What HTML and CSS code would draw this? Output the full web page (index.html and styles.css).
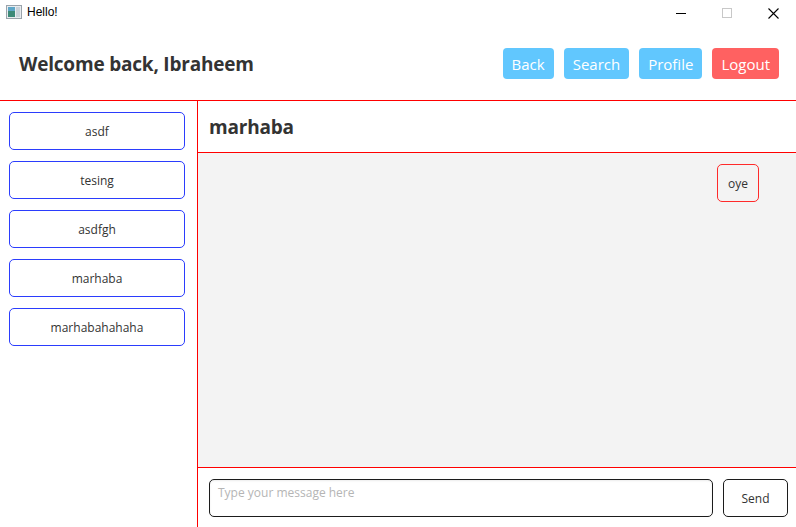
FILE: index.html
```html
<!DOCTYPE html>
<html>
<head>
<meta charset="utf-8">
<link rel="stylesheet" href="styles.css">
</head>
<body>
<div class="window">
  <div class="titlebar">
    <div class="app">
      <svg class="appicon" width="16" height="14" viewBox="0 0 16 14">
        <rect x="0.5" y="0.5" width="15" height="13" fill="#e8ecef" stroke="#9aa3ab"/>
        <rect x="2" y="2" width="7" height="10" fill="#3d8a78"/>
        <rect x="2" y="2" width="7" height="4" fill="#5fa7c8"/>
        <rect x="10" y="2" width="4" height="10" fill="#c9d2d9"/>
      </svg>
      <span class="apptitle">Hello!</span>
    </div>
    <div class="controls">
      <span class="ctl"><svg width="10" height="10" viewBox="0 0 10 10"><line x1="0" y1="5.5" x2="10" y2="5.5" stroke="#000" stroke-width="1"/></svg></span>
      <span class="ctl"><svg width="10" height="10" viewBox="0 0 10 10"><rect x="0.5" y="0.5" width="9" height="9" fill="none" stroke="#c8c8c8"/></svg></span>
      <span class="ctl"><svg width="11" height="11" viewBox="0 0 11 11"><path d="M0.5 0.5 L10.5 10.5 M10.5 0.5 L0.5 10.5" stroke="#000" stroke-width="1.1"/></svg></span>
    </div>
  </div>
  <div class="header">
    <h1 class="welcome">Welcome back, Ibraheem</h1>
    <div class="nav">
      <button class="btn blue">Back</button>
      <button class="btn blue">Search</button>
      <button class="btn blue">Profile</button>
      <button class="btn red">Logout</button>
    </div>
  </div>
  <div class="main">
    <div class="sidebar">
      <div class="chatitem">asdf</div>
      <div class="chatitem">tesing</div>
      <div class="chatitem">asdfgh</div>
      <div class="chatitem">marhaba</div>
      <div class="chatitem">marhabahahaha</div>
    </div>
    <div class="chat">
      <div class="chathead">marhaba</div>
      <div class="messages">
        <div class="bubble">oye</div>
      </div>
      <div class="composer">
        <div class="input">Type your message here</div>
        <button class="send">Send</button>
      </div>
    </div>
  </div>
</div>
</body>
</html>
```
FILE: styles.css
```css
* { box-sizing: border-box; }
html, body { margin: 0; padding: 0; }
body {
  width: 796px;
  height: 527px;
  overflow: hidden;
  background: #fff;
  font-family: "Open Sans", "Noto Sans", sans-serif;
  color: #333;
}
.window { display: flex; flex-direction: column; height: 527px; }
.titlebar {
  height: 30px;
  display: flex;
  justify-content: space-between;
  align-items: flex-start;
}
.app { display: flex; align-items: center; padding: 5px 0 0 6px; gap: 5px; }
.appicon { display: block; }
.apptitle { font-family: "Liberation Sans", sans-serif; font-size: 12px; color: #000; }
.controls { display: flex; }
.ctl {
  width: 46px;
  height: 25px;
  display: flex;
  align-items: center;
  justify-content: center;
  padding-top: 1px;
}
.header {
  height: 71px;
  border-bottom: 1px solid #ff0000;
  display: flex;
  align-items: center;
  justify-content: space-between;
  padding: 0 17px 3px 19px;
}
.welcome {
  margin: 0;
  font-size: 19px;
  font-weight: 700;
  color: #333;
  letter-spacing: -0.2px;
}
.nav { display: flex; gap: 10px; }
.btn {
  border: none;
  border-radius: 4px;
  height: 31px;
  padding: 0 9px;
  font-family: "Open Sans", sans-serif;
  font-size: 15px;
  color: #fff;
}
.blue { background: #61c7fe; }
.red { background: #ff6161; }
.main { flex: 1; display: flex; min-height: 0; }
.sidebar {
  width: 198px;
  border-right: 1px solid #ff0000;
  padding: 11px 12px 0 9px;
  display: flex;
  flex-direction: column;
  gap: 11px;
}
.chatitem {
  height: 38px;
  border: 1.5px solid #2b3dfd;
  border-radius: 5px;
  display: flex;
  align-items: center;
  justify-content: center;
  font-size: 12px;
  color: #333;
}
.chat { flex: 1; display: flex; flex-direction: column; }
.chathead {
  height: 52px;
  border-bottom: 1px solid #ff0000;
  display: flex;
  align-items: center;
  padding: 0 11px 0;
  font-size: 19px;
  font-weight: 700;
  color: #333;
  letter-spacing: -0.2px;
}
.messages {
  height: 315px;
  background: #f3f3f3;
  border-bottom: 1px solid #ff0000;
  display: flex;
  flex-direction: column;
  align-items: flex-end;
  padding: 11px 37px 0 0;
}
.bubble {
  width: 42px;
  height: 38px;
  border: 1.5px solid #ff2a2a;
  border-radius: 5px;
  display: flex;
  align-items: center;
  justify-content: center;
  font-size: 12px;
  color: #333;
}
.composer {
  flex: 1;
  display: flex;
  gap: 10px;
  padding: 11px 8px 0 11px;
  align-items: flex-start;
}
.input {
  flex: 1;
  height: 38px;
  border: 1px solid #1c1c1c;
  border-radius: 5px;
  padding: 4px 8px;
  font-size: 12px;
  color: #b5b5b5;
  box-shadow: inset 0 1px 2px rgba(0,0,0,0.08);
}
.send {
  width: 65px;
  height: 38px;
  border: 1px solid #1c1c1c;
  border-radius: 5px;
  background: #fff;
  font-family: "Open Sans", sans-serif;
  font-size: 12px;
  color: #333;
}
```
